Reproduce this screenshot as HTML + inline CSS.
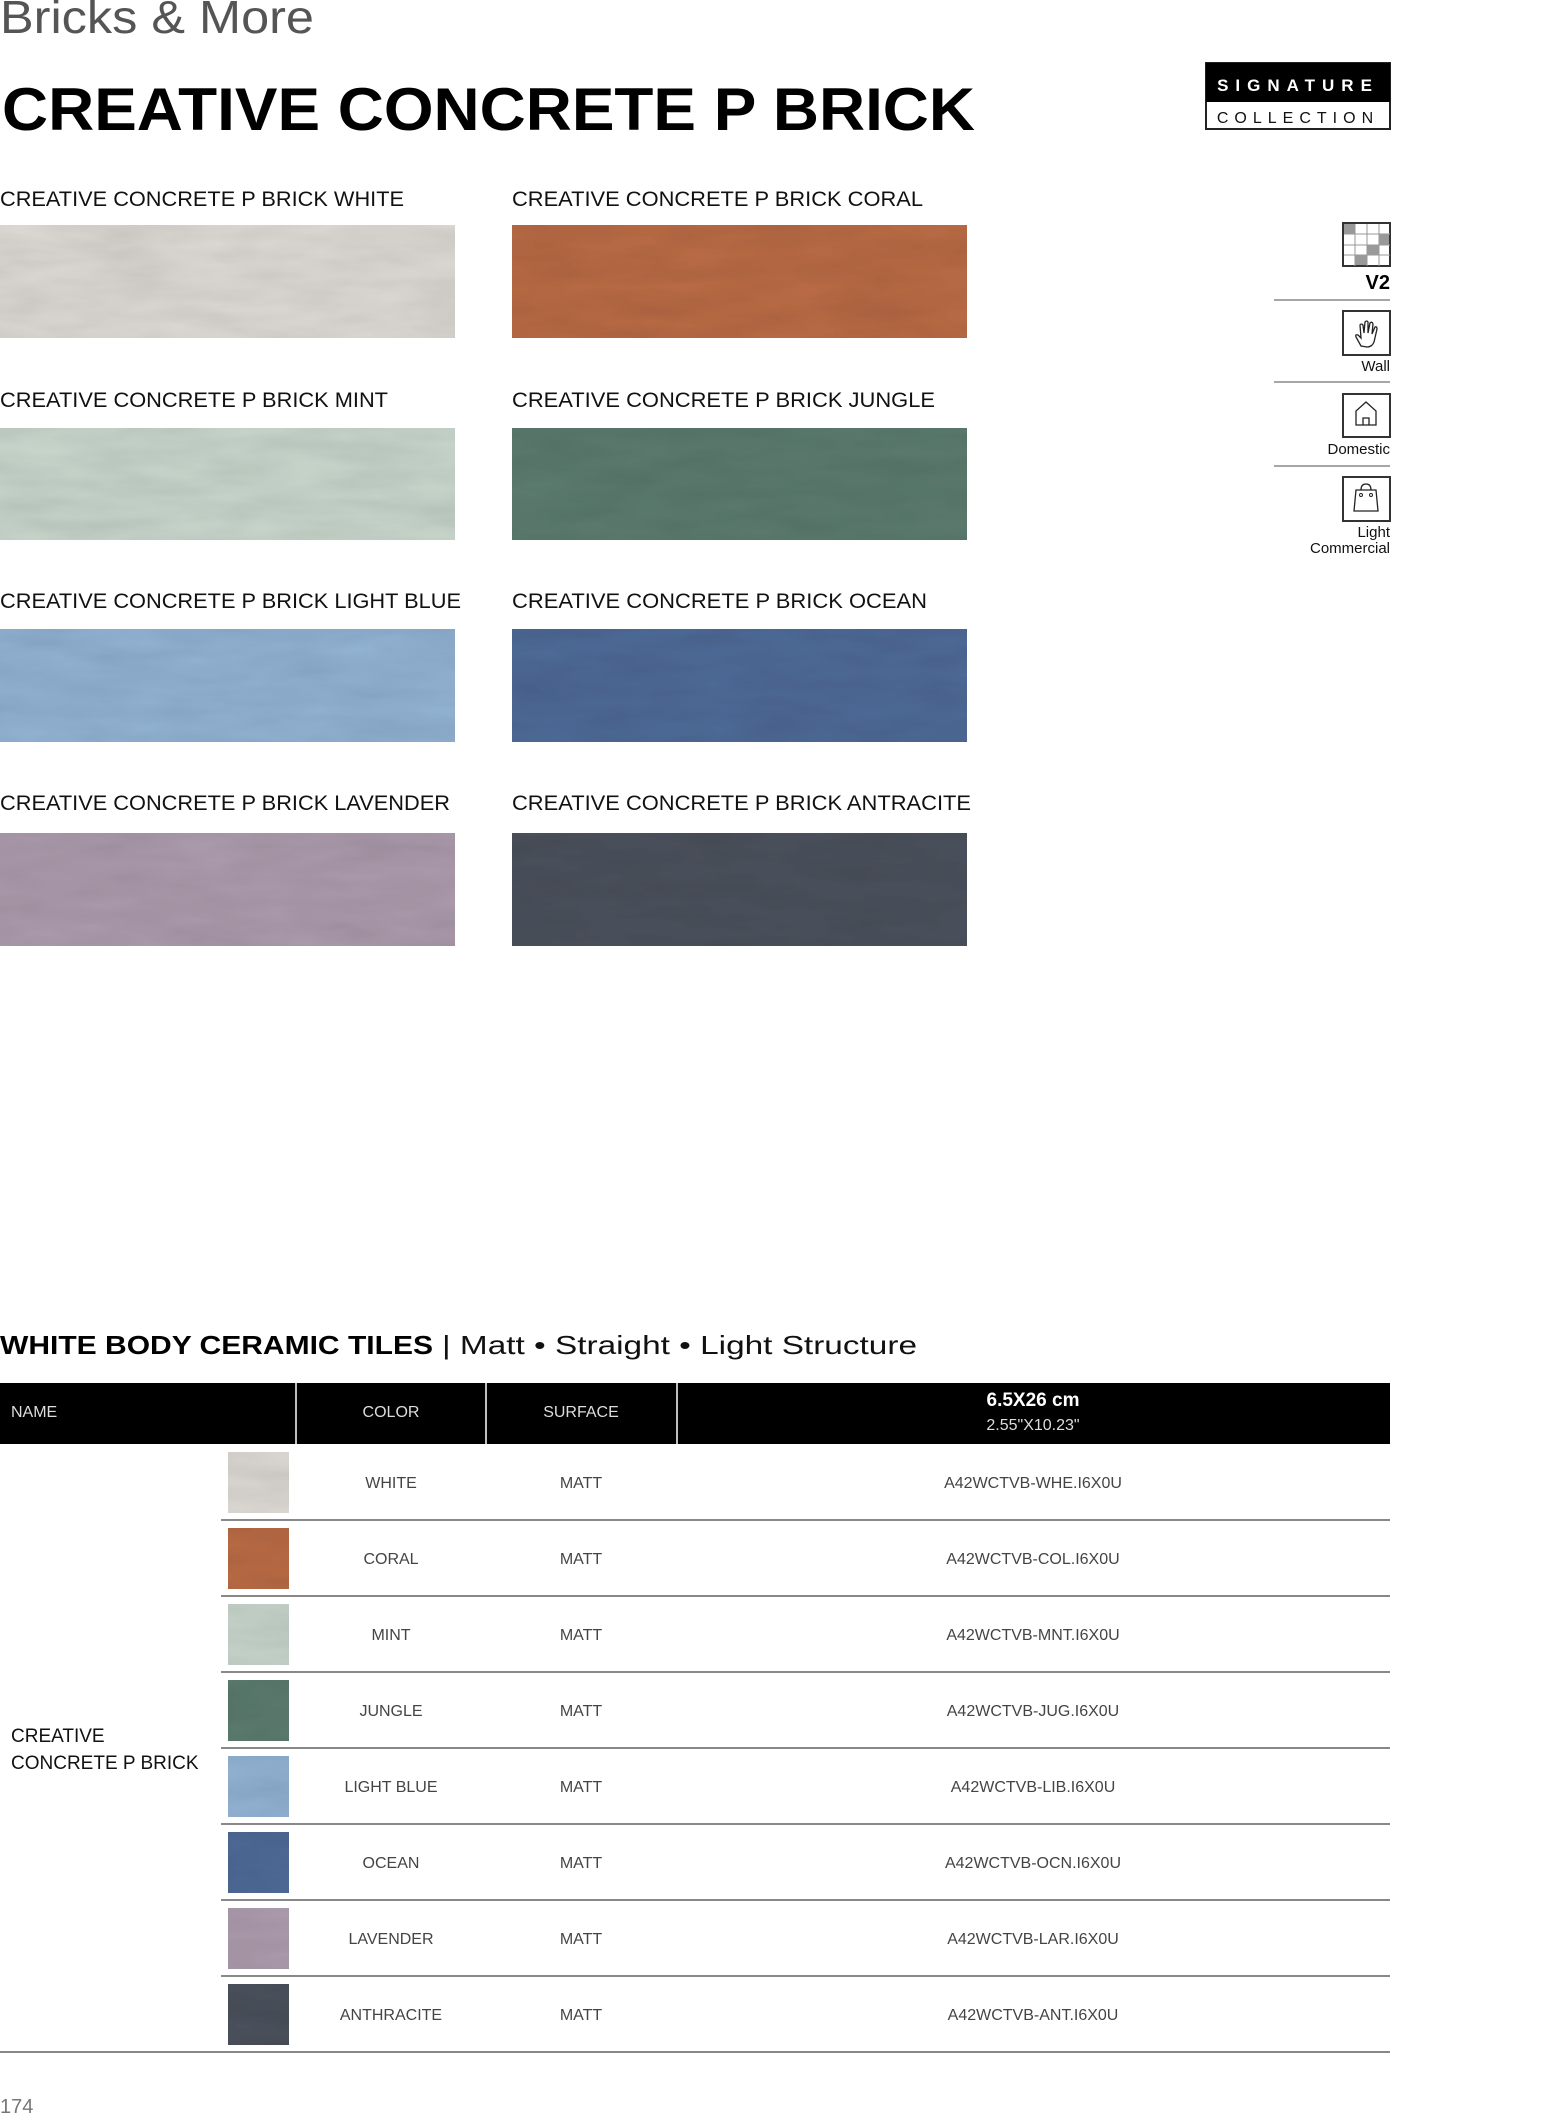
<!DOCTYPE html>
<html><head><meta charset="utf-8"><style>
html,body{margin:0;padding:0;background:#fff;}
svg{display:block;}
text{font-family:"Liberation Sans",sans-serif;}
</style></head><body>
<svg width="1550" height="2118" viewBox="0 0 1550 2118" xmlns="http://www.w3.org/2000/svg">
<defs>
<filter id="tx" x="0" y="0" width="1" height="1">
<feTurbulence type="fractalNoise" baseFrequency="0.012 0.05" numOctaves="3" seed="4"/>
<feColorMatrix type="matrix" values="0 0 0 0 0  0 0 0 0 0  0 0 0 0 0  0 0 0 0.22 0"/>
<feComposite in2="SourceGraphic" operator="in"/>
<feBlend in="SourceGraphic" mode="multiply"/>
</filter>
</defs>
<text x="0" y="33" font-size="46" font-weight="300" fill="#555" textLength="314" lengthAdjust="spacingAndGlyphs">Bricks &amp; More</text>
<text x="2" y="130" font-size="60" font-weight="700" fill="#000" textLength="973" lengthAdjust="spacingAndGlyphs">CREATIVE CONCRETE P BRICK</text>

<rect x="1206" y="63" width="184" height="66" fill="#fff" stroke="#222" stroke-width="2"/>
<rect x="1206" y="63" width="184" height="39" fill="#000"/>
<text x="1298" y="91" font-size="17" font-weight="700" fill="#fff" text-anchor="middle" letter-spacing="7">SIGNATURE</text>
<text x="1298" y="123" font-size="16" fill="#111" text-anchor="middle" letter-spacing="6">COLLECTION</text>

<g font-size="21" fill="#111">
<text x="0" y="206" textLength="404" lengthAdjust="spacingAndGlyphs">CREATIVE CONCRETE P BRICK WHITE</text>
<text x="512" y="206" textLength="411" lengthAdjust="spacingAndGlyphs">CREATIVE CONCRETE P BRICK CORAL</text>
<text x="0" y="407" textLength="388" lengthAdjust="spacingAndGlyphs">CREATIVE CONCRETE P BRICK MINT</text>
<text x="512" y="407" textLength="423" lengthAdjust="spacingAndGlyphs">CREATIVE CONCRETE P BRICK JUNGLE</text>
<text x="0" y="608" textLength="461" lengthAdjust="spacingAndGlyphs">CREATIVE CONCRETE P BRICK LIGHT BLUE</text>
<text x="512" y="608" textLength="415" lengthAdjust="spacingAndGlyphs">CREATIVE CONCRETE P BRICK OCEAN</text>
<text x="0" y="810" textLength="450" lengthAdjust="spacingAndGlyphs">CREATIVE CONCRETE P BRICK LAVENDER</text>
<text x="512" y="810" textLength="459" lengthAdjust="spacingAndGlyphs">CREATIVE CONCRETE P BRICK ANTRACITE</text>
</g>
<g filter="url(#tx)">
<rect x="0" y="225" width="455" height="113" fill="#dedad5"/>
<rect x="512" y="225" width="455" height="113" fill="#bb6c46"/>
<rect x="0" y="428" width="455" height="112" fill="#c9d7cd"/>
<rect x="512" y="428" width="455" height="112" fill="#5c7c6f"/>
<rect x="0" y="629" width="455" height="113" fill="#93b3d4"/>
<rect x="512" y="629" width="455" height="113" fill="#4e6b98"/>
<rect x="0" y="833" width="455" height="113" fill="#ad9cae"/>
<rect x="512" y="833" width="455" height="113" fill="#4c525d"/>
</g>

<g stroke="#333" fill="none" stroke-width="1.5">
<rect x="1343" y="223" width="47" height="43" stroke-width="2"/>
</g>
<g fill="#999">
<rect x="1344" y="224" width="11" height="10"/>
<rect x="1379" y="234" width="10" height="11"/>
<rect x="1367" y="245" width="12" height="10"/>
<rect x="1355" y="255" width="12" height="10"/>
</g>
<g stroke="#999" stroke-width="1">
<line x1="1355" y1="224" x2="1355" y2="266"/><line x1="1367" y1="224" x2="1367" y2="266"/><line x1="1379" y1="224" x2="1379" y2="266"/>
<line x1="1344" y1="234" x2="1390" y2="234"/><line x1="1344" y1="245" x2="1390" y2="245"/><line x1="1344" y1="255" x2="1390" y2="255"/>
</g>
<text x="1390" y="289" font-size="20" font-weight="700" text-anchor="end" fill="#000">V2</text>
<line x1="1274" y1="300" x2="1390" y2="300" stroke="#888" stroke-width="1.5"/>
<rect x="1343" y="311" width="47" height="44" fill="none" stroke="#333" stroke-width="2"/>
<path d="M1361 346 L1356 337 Q1355 334 1358 335 L1361 338 L1360 325 Q1361 323 1363 325 L1364 333 L1365 322 Q1367 320 1368 322 L1368 333 L1370 323 Q1372 321 1373 324 L1372 334 L1375 327 Q1377 326 1377 329 L1374 342 Q1372 347 1367 347 Z" fill="none" stroke="#222" stroke-width="1.3"/>
<text x="1390" y="371" font-size="15" text-anchor="end" fill="#111">Wall</text>
<line x1="1274" y1="382" x2="1390" y2="382" stroke="#888" stroke-width="1.5"/>
<rect x="1343" y="394" width="47" height="43" fill="none" stroke="#333" stroke-width="2"/>
<path d="M1356 425 L1356 411 L1366 402 L1376 411 L1376 425 Z M1363 425 L1363 418 L1369 418 L1369 425" fill="none" stroke="#222" stroke-width="1.3"/>
<text x="1390" y="454" font-size="15" text-anchor="end" fill="#111">Domestic</text>
<line x1="1274" y1="466" x2="1390" y2="466" stroke="#888" stroke-width="1.5"/>
<rect x="1343" y="477" width="47" height="44" fill="none" stroke="#333" stroke-width="2"/>
<path d="M1354 511 L1356 490 L1376 490 L1378 511 Z M1361 490 Q1361 484 1366 484 Q1371 484 1371 490" fill="none" stroke="#222" stroke-width="1.3"/>
<circle cx="1361" cy="495" r="1.5" fill="none" stroke="#222"/><circle cx="1371" cy="495" r="1.5" fill="none" stroke="#222"/>
<text x="1390" y="537" font-size="15" text-anchor="end" fill="#111">Light</text>
<text x="1390" y="553" font-size="15" text-anchor="end" fill="#111">Commercial</text>

<text x="0" y="1354" font-size="26" font-weight="700" fill="#000" textLength="433" lengthAdjust="spacingAndGlyphs">WHITE BODY CERAMIC TILES</text>
<text x="442" y="1354" font-size="26" fill="#111" textLength="475" lengthAdjust="spacingAndGlyphs">| Matt • Straight • Light Structure</text>
<rect x="0" y="1383" width="1390" height="61" fill="#000"/>
<g stroke="#fff" stroke-width="1.5"><line x1="296" y1="1383" x2="296" y2="1444"/><line x1="486" y1="1383" x2="486" y2="1444"/><line x1="677" y1="1383" x2="677" y2="1444"/></g>
<g font-size="16" fill="#ddd">
<text x="11" y="1417">NAME</text>
<text x="391" y="1417" text-anchor="middle">COLOR</text>
<text x="581" y="1417" text-anchor="middle">SURFACE</text>
<text x="1033" y="1406" text-anchor="middle" font-size="19" font-weight="700" fill="#fff">6.5X26 cm</text>
<text x="1033" y="1430" text-anchor="middle" font-size="16">2.55"X10.23"</text>
</g>
<text x="11" y="1742" font-size="19" fill="#111">CREATIVE</text>
<text x="11" y="1769" font-size="19" fill="#111">CONCRETE P BRICK</text>
<g stroke="#888" stroke-width="2">
<line x1="221" y1="1520" x2="1390" y2="1520"/><line x1="221" y1="1596" x2="1390" y2="1596"/><line x1="221" y1="1672" x2="1390" y2="1672"/><line x1="221" y1="1748" x2="1390" y2="1748"/><line x1="221" y1="1824" x2="1390" y2="1824"/><line x1="221" y1="1900" x2="1390" y2="1900"/><line x1="221" y1="1976" x2="1390" y2="1976"/><line x1="0" y1="2052" x2="1390" y2="2052"/>
</g>
<g filter="url(#tx)">
<rect x="228" y="1452" width="61" height="61" fill="#dedad5"/>
<rect x="228" y="1528" width="61" height="61" fill="#bb6c46"/>
<rect x="228" y="1604" width="61" height="61" fill="#c9d7cd"/>
<rect x="228" y="1680" width="61" height="61" fill="#5c7c6f"/>
<rect x="228" y="1756" width="61" height="61" fill="#93b3d4"/>
<rect x="228" y="1832" width="61" height="61" fill="#4e6b98"/>
<rect x="228" y="1908" width="61" height="61" fill="#ad9cae"/>
<rect x="228" y="1984" width="61" height="61" fill="#4c525d"/>
</g>
<g font-size="16" fill="#444" text-anchor="middle">
<text x="391" y="1488">WHITE</text><text x="581" y="1488">MATT</text><text x="1033" y="1488">A42WCTVB-WHE.I6X0U</text>
<text x="391" y="1564">CORAL</text><text x="581" y="1564">MATT</text><text x="1033" y="1564">A42WCTVB-COL.I6X0U</text>
<text x="391" y="1640">MINT</text><text x="581" y="1640">MATT</text><text x="1033" y="1640">A42WCTVB-MNT.I6X0U</text>
<text x="391" y="1716">JUNGLE</text><text x="581" y="1716">MATT</text><text x="1033" y="1716">A42WCTVB-JUG.I6X0U</text>
<text x="391" y="1792">LIGHT BLUE</text><text x="581" y="1792">MATT</text><text x="1033" y="1792">A42WCTVB-LIB.I6X0U</text>
<text x="391" y="1868">OCEAN</text><text x="581" y="1868">MATT</text><text x="1033" y="1868">A42WCTVB-OCN.I6X0U</text>
<text x="391" y="1944">LAVENDER</text><text x="581" y="1944">MATT</text><text x="1033" y="1944">A42WCTVB-LAR.I6X0U</text>
<text x="391" y="2020">ANTHRACITE</text><text x="581" y="2020">MATT</text><text x="1033" y="2020">A42WCTVB-ANT.I6X0U</text>
</g>
<text x="0" y="2113" font-size="20" fill="#777">174</text>
</svg>
</body></html>
